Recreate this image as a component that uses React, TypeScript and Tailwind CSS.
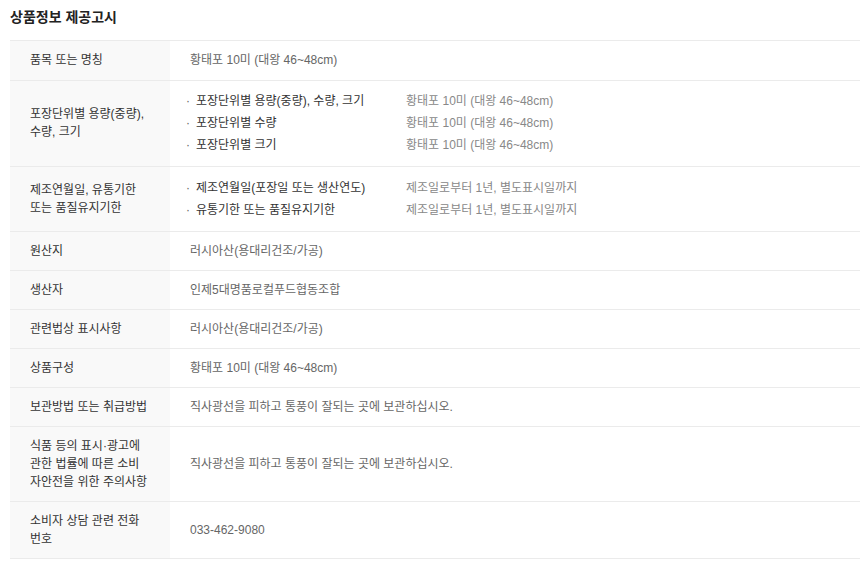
const VALUE = '황태포 10미 (대왕 46~48cm)';
const STORAGE = '직사광선을 피하고 통풍이 잘되는 곳에 보관하십시오.';
const SHELF = '제조일로부터 1년, 별도표시일까지';

type Item = { name: string; value: string };
type Row = { label: string; value?: string; items?: Item[]; pad?: string };

const rows: Row[] = [
    { label: '품목 또는 명칭', value: VALUE, pad: 'pt-[10px] pb-[11px]' },
    {
        label: '포장단위별 용량(중량),\n수량, 크기',
        pad: 'pt-[9px] pb-[10px]',
        items: [
            { name: '포장단위별 용량(중량), 수량, 크기', value: VALUE },
            { name: '포장단위별 수량', value: VALUE },
            { name: '포장단위별 크기', value: VALUE },
        ],
    },
    {
        label: '제조연월일, 유통기한\n또는 품질유지기한',
        items: [
            { name: '제조연월일(포장일 또는 생산연도)', value: SHELF },
            { name: '유통기한 또는 품질유지기한', value: SHELF },
        ],
    },
    { label: '원산지', value: '러시아산(용대리건조/가공)' },
    { label: '생산자', value: '인제5대명품로컬푸드협동조합' },
    { label: '관련법상 표시사항', value: '러시아산(용대리건조/가공)' },
    { label: '상품구성', value: VALUE },
    { label: '보관방법 또는 취급방법', value: STORAGE },
    { label: '식품 등의 표시·광고에\n관한 법률에 따른 소비\n자안전을 위한 주의사항', value: STORAGE },
    { label: '소비자 상담 관련 전화\n번호', value: '033-462-9080' },
];

export default function App() {
    return (
        <div className="w-[860px] h-[565px] bg-white pl-[10px] font-['Liberation_Sans','Noto_Sans_CJK_KR',sans-serif] text-[12px]">
            {/* 제목 */}
            <h2 className="h-[40px] pt-[8px] text-[14px] font-bold text-[#222] leading-[18px]">상품정보 제공고시</h2>

            {/* 고시 표 */}
            <div className="border-t border-[#ebebeb]">
                {rows.map((row) => (
                    <div key={row.label} className="flex border-b border-[#ebebeb]">
                        <div className={`w-[160px] shrink-0 bg-[#f9f9f9] pl-[20px] pr-[6px] flex items-center text-[#333] leading-[18px] whitespace-pre-line ${row.pad ?? 'py-[10px]'}`}>
                            {row.label}
                        </div>
                        <div className={`flex-1 px-[20px] flex items-center ${row.pad ?? 'py-[10px]'}`}>
                            {row.items ? (
                                <ul className="w-full">
                                    {row.items.map((item) => (
                                        <li key={item.name} className="flex -ml-[4px] leading-[22px]">
                                            <span className="w-[220px] shrink-0 text-[#333]">
                                                <span className="inline-block w-[10px] text-[#666]">·</span>
                                                {item.name}
                                            </span>
                                            <span className="text-[#888]">{item.value}</span>
                                        </li>
                                    ))}
                                </ul>
                            ) : (
                                <p className="text-[#666] leading-[18px]">{row.value}</p>
                            )}
                        </div>
                    </div>
                ))}
            </div>
        </div>
    );
}
